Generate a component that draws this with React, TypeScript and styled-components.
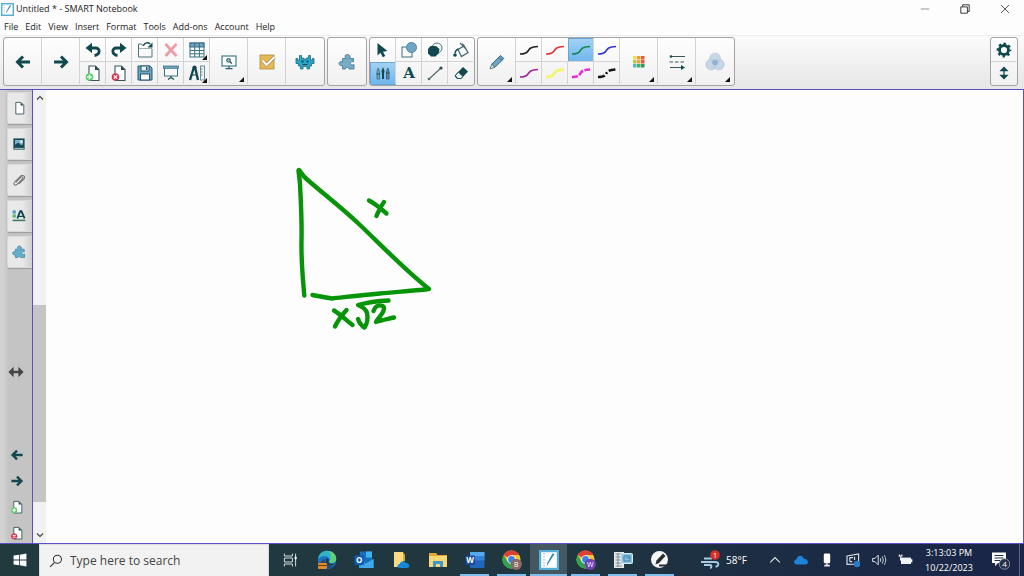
import React from "react";
import styled, { createGlobalStyle, css } from "styled-components";

const teal = "#12494f";
const sky = "#6fa5c4";
const edge = "#5b4fc4";

const Global = createGlobalStyle`
  *, *::before, *::after { box-sizing: border-box; }
  body { margin: 0; background: #fdfdfd; color: #222; font-family: "Open Sans", "Noto Sans", sans-serif; }
  button, input { font: inherit; color: inherit; }
  button { border: 0; padding: 0; margin: 0; background: none; }
  svg { display: block; flex: none; }
`;

const Page = styled.div`
  display: flex;
  flex-direction: column;
  min-height: 100vh;
`;

const TitleBar = styled.header`
  display: flex;
  align-items: center;
  height: 18px;
  padding-left: 1px;
  gap: 2px;
`;

const Title = styled.h1`
  flex: 1;
  margin: 0;
  font-size: 9px;
  line-height: 18px;
  font-weight: 400;
`;

const WindowButton = styled.button`
  display: grid;
  place-items: center;
  width: 38px;
  height: 18px;
`;

const MenuBar = styled.nav`
  display: flex;
  gap: 7px;
  height: 18px;
  padding: 0 4px;
  border-bottom: 1px solid #ededed;
`;

const MenuButton = styled.button`
  font-size: 9px;
  line-height: 16px;
`;

const ToolBar = styled.div`
  display: flex;
  gap: 2px;
  padding: 1px 6px 3px 3px;
  background: linear-gradient(#fbfbfb, #e6e6e7);
`;

const Group = styled.div<{ $end?: boolean }>`
  display: flex;
  height: 49px;
  border: 1px solid #a3a3a5;
  border-radius: 3px;
  overflow: hidden;
  background: linear-gradient(#fefefe, #f0f0f1);
  ${(p) => p.$end && css`margin-left: auto;`}
`;

const SmallGrid = styled.div<{ $columns: number }>`
  display: grid;
  grid-template-columns: repeat(${(p) => p.$columns}, 26px);
  grid-template-rows: 1fr 1fr;
`;

const Tool = styled.button<{ $big?: boolean; $on?: boolean; $menu?: boolean }>`
  position: relative;
  display: grid;
  place-items: center;
  width: ${(p) => (p.$big ? 38 : 26)}px;
  box-shadow: -1px -1px 0 #d3d3d5;
  ${(p) => p.$on && css`
    background: linear-gradient(#a4d2f5, #6db5ec);
    box-shadow: inset 0 0 0 1px #6aa5d3;
  `}
  ${(p) => p.$menu && css`
    &::after {
      content: "";
      position: absolute;
      right: ${p.$big ? 4 : 3}px;
      bottom: ${p.$big ? 3 : 2}px;
      border-style: solid;
      border-width: 0 0 5px 5px;
      border-color: transparent transparent #111 transparent;
    }
  `}
`;

const Work = styled.main`
  flex: 1;
  display: grid;
  grid-template-columns: 32px 14px 1fr;
  border-top: 1px solid ${edge};
  border-right: 1px solid ${edge};
  border-bottom: 1px solid ${edge};
`;

const Side = styled.aside`
  display: flex;
  flex-direction: column;
  padding: 2px 0 0 7px;
  background: linear-gradient(90deg, #d2d2d2 0 3px, #c4c4c4 9px);
`;

const Tabs = styled.div`
  display: flex;
  flex-direction: column;
  gap: 4px;
`;

const Tab = styled.button`
  display: grid;
  place-items: center;
  height: 32px;
  padding-right: 2px;
  border: 1px solid #d9d9d9;
  border-right: 0;
  border-radius: 2px 0 0 2px;
  box-shadow: 0 1px 1px #9c9c9c;
  background: linear-gradient(90deg, #e9e9e9 0 60%, #cfcfcf);
`;

const Resize = styled.button`
  flex: 1;
  display: grid;
  place-items: center;
  padding: 30px 8px 0 0;
`;

const PageButtons = styled.div`
  display: flex;
  flex-direction: column;
  gap: 6px;
`;

const PageButton = styled.button`
  display: grid;
  place-items: center;
  height: 20px;
  padding-right: 6px;
`;

const Scroll = styled.div`
  display: grid;
  grid-template-rows: 16px 200fr 198fr 25fr 16px;
  border-left: 1px solid ${edge};
  background: #f1f1f1;
`;

const ScrollButton = styled.button<{ $row: number }>`
  grid-row: ${(p) => p.$row};
  display: grid;
  place-items: center;
`;

const Thumb = styled.div`
  grid-row: 3;
  background: #c5c5c5;
`;

const Canvas = styled.section`
  position: relative;
  background: #fdfdfd;
`;

const Ink = styled.svg`
  position: absolute;
  left: 244px;
  top: 70px;
  fill: none;
  stroke: #079409;
  stroke-width: 4.400;
  stroke-linecap: round;
  stroke-linejoin: round;
`;

const TaskBar = styled.footer`
  display: flex;
  height: 32px;
  color: #fff;
  background: linear-gradient(90deg, #203a3e, #203640 55%, #1b2a45 82%, #1a2548);
`;

const Start = styled.button`
  display: grid;
  place-items: center;
  width: 39px;
`;

const Search = styled.label`
  display: flex;
  align-items: center;
  gap: 7px;
  width: 230px;
  padding-left: 9px;
  color: #333;
  background: #f2f2f2;
  border: 1px solid #dcdcdc;
  border-bottom: 0;
`;

const SearchInput = styled.input`
  min-width: 0;
  flex: 1;
  border: 0;
  padding: 0;
  outline: 0;
  background: none;
  font-size: 12px;
  &::placeholder { color: #444; opacity: 1; }
`;

const Apps = styled.div`
  display: flex;
  padding-left: 2px;
`;

const AppButton = styled.button<{ $open?: boolean; $active?: boolean }>`
  display: grid;
  place-items: center;
  width: 37px;
  background: ${(p) => (p.$active ? "#435860" : "none")};
  ${(p) => p.$open && css`
    background-image: linear-gradient(#7fbfee, #7fbfee);
    background-repeat: no-repeat;
    background-position: center bottom;
    background-size: ${p.$active ? "37px" : "29px"} 2px;
  `}
`;

const Tray = styled.div`
  display: flex;
  margin-left: auto;
`;

const Weather = styled.button`
  display: flex;
  align-items: center;
  gap: 6px;
  font-size: 10px;
  margin-right: 15px;
`;

const TrayButton = styled.button<{ $wide?: boolean }>`
  display: grid;
  place-items: center;
  width: ${(p) => (p.$wide ? 39 : 26)}px;
`;

const Clock = styled.button`
  width: 62px;
  font-size: 9px;
  line-height: 15px;
  text-align: center;
`;

const Desktop = styled.button`
  width: 5px;
  border-left: 1px solid #59637d;
`;

type SvgProps = { size?: number; children: React.ReactNode };
const Icon = ({ size = 20, children }: SvgProps) => (
  <svg width={size} height={size} viewBox="0 0 20 20" fill="none" aria-hidden="true">
    {children}
  </svg>
);

const ArrowLeft = ({ size = 20 }: { size?: number }) => (
  <Icon size={size}>
    <path d="M17 10H5M10 4.500L4.500 10L10 15.500" stroke={teal} strokeWidth="3" />
  </Icon>
);
const ArrowRight = ({ size = 20 }: { size?: number }) => (
  <Icon size={size}>
    <path d="M3 10H15M10 4.500L15.500 10L10 15.500" stroke={teal} strokeWidth="3" />
  </Icon>
);
const Undo = () => (
  <Icon>
    <path d="M7 8H12.500C17.500 8 17.500 14.500 11.500 15.500" stroke={teal} strokeWidth="2.800" />
    <path d="M9 2.800L2.500 8L9 13Z" fill={teal} />
  </Icon>
);
const Redo = () => (
  <Icon>
    <path d="M13 8H7.500C2.500 8 2.500 14.500 8.500 15.500" stroke={teal} strokeWidth="2.800" />
    <path d="M11 2.800L17.500 8L11 13Z" fill={teal} />
  </Icon>
);
const OpenFile = () => (
  <Icon>
    <path d="M9 5.500H7.500L6.500 4H3.500V17H17V9" stroke="#4d7278" />
    <path d="M4 8.500H17" stroke="#9db2b5" />
    <path d="M8.500 5.500C9.500 2.500 13 2 15 4" stroke={teal} strokeWidth="1.500" />
    <path d="M17.500 2.500V7.500H12.500Z" fill={teal} />
  </Icon>
);
const Delete = () => (
  <Icon><path d="M4.500 4L15.500 16M15.500 4L4.500 16" stroke="#ee9ca3" strokeWidth="2.800" /></Icon>
);
const TableIcon = () => (
  <Icon>
    <rect x="3" y="3" width="14" height="14" fill="#f8fbfc" stroke="#3d6f83" />
    <rect x="3" y="3" width="14" height="4" fill={sky} stroke="#3d6f83" />
    <path d="M3 10.500H17M3 13.800H17M7.700 3V17M12.400 3V17" stroke="#3d6f83" />
  </Icon>
);
const PageIcon = ({ badge, size = 20 }: { badge?: "add" | "remove"; size?: number }) => (
  <Icon size={size}>
    <path d="M6 3H12.500L16 6.500V17.500H6Z" fill="#fdfdfd" stroke="#38555b" strokeWidth="1.100" />
    <path d="M12 3V7H16Z" fill="#25484f" />
    {badge === "add" && (
      <>
        <circle cx="6.500" cy="14" r="3.800" fill="#55cc66" />
        <path d="M6.500 11.500V16.500M4 14H9" stroke="#e9ffe9" strokeWidth="1.500" />
      </>
    )}
    {badge === "remove" && (
      <>
        <circle cx="6.500" cy="14" r="3.800" fill="#d83350" />
        <path d="M4.800 12.300L8.200 15.700M8.200 12.300L4.800 15.700" stroke="#ffe3e8" strokeWidth="1.300" />
      </>
    )}
  </Icon>
);
const Save = () => (
  <Icon>
    <path d="M3 3H15L17 5V17H3Z" fill={sky} stroke="#24586c" />
    <rect x="6" y="3" width="8" height="5" fill="#e9f1f4" stroke="#24586c" />
    <rect x="5.500" y="11" width="9" height="6" fill="#fafafa" stroke="#24586c" />
    <rect x="11" y="4" width="1.500" height="3" fill="#24586c" />
  </Icon>
);
const Screen = () => (
  <Icon>
    <rect x="3.500" y="4" width="13" height="9" fill="#fafafa" stroke="#3d6f83" />
    <rect x="2.500" y="3" width="15" height="2.300" fill={sky} stroke="#3d6f83" strokeWidth=".8" />
    <path d="M10 13V15M7 16.500L10 14.500L13 16.500" stroke={teal} strokeWidth="1.200" />
  </Icon>
);
const Measure = () => (
  <Icon>
    <path d="M7 4L3 17M8 4L11 17" stroke={teal} strokeWidth="2.400" />
    <path d="M4.500 12H10" stroke={teal} strokeWidth="1.200" />
    <circle cx="7.500" cy="4.500" r="2" fill={teal} />
    <rect x="13.500" y="3" width="4" height="14" fill="#eef4f5" stroke="#6b8c94" />
    <path d="M13.500 6H15.500M13.500 9H15.500M13.500 12H15.500" stroke="#6b8c94" />
  </Icon>
);
const Monitor = () => (
  <Icon>
    <rect x="3" y="4" width="14" height="10" fill="#fcfcfc" stroke="#3f7d8b" strokeWidth="1.200" />
    <path d="M10 14V16.500M6.500 16.700H13.500" stroke="#2b626c" strokeWidth="1.300" />
    <circle cx="9.500" cy="8.300" r="1.800" fill="#9bc2d0" stroke={teal} />
    <path d="M11 9.700L12.800 11.500" stroke={teal} strokeWidth="1.300" />
  </Icon>
);
const Check = () => (
  <Icon>
    <rect x="3" y="3" width="14" height="14" fill="#e6b955" stroke="#a98a45" strokeWidth=".8" />
    <path d="M5.500 8.500L9.500 13L17.500 5" stroke="#94794a" strokeWidth="3.200" />
    <path d="M5.500 8.500L9.500 13L17.500 5" stroke="#fffaf0" strokeWidth="2.200" />
  </Icon>
);
const Monster = () => (
  <Icon>
    <path d="M4.500 3.500H6.500V6H8.500V7H11.500V6H13.500V3.500H15.500V8H17.500V6.500H19V11.500H16.500V14H14.500V17H12V14.500H8V17H5.500V14H3.500V11.500H1V6.500H2.500V8H4.500Z" fill="#2aa6c8" stroke="#176980" strokeWidth=".8" />
    <rect x="6.500" y="8.500" width="2" height="2" fill="#0f4250" /><rect x="11.500" y="8.500" width="2" height="2" fill="#0f4250" />
    <path d="M7.500 12.500H12.500" stroke="#0f4250" />
  </Icon>
);
const Puzzle = ({ size = 20, fill = "#78abc4" }: { size?: number; fill?: string }) => (
  <Icon size={size}>
    <path d="M5.500 6.500H9C7 4 8.500 2.500 10.500 2.500S14 4.500 12.500 6.500H16.500V10C14.500 9 13.500 10 13.500 11.300S15 13.500 17 12.500V17H12C12 15 8.500 15 8.500 17H5.500V13.500C3.500 14 2 13 2 11.500S3.500 9 5.500 10Z" fill={fill} stroke="#4b7f96" strokeWidth=".9" />
  </Icon>
);
const Cursor = () => (
  <Icon><path d="M4.500 3V15.500L7.500 12.800L9.800 17.300L12.300 16L10 11.700L14.500 11Z" fill={teal} /></Icon>
);
const Shapes = () => (
  <Icon>
    <rect x="3" y="7" width="10" height="10" fill="#fafafa" stroke="#3d6f83" />
    <circle cx="12.500" cy="7.500" r="5" fill={sky} stroke="#5086a2" />
  </Icon>
);
const Polygon = () => (
  <Icon>
    <circle cx="12" cy="8" r="5" fill="#f7f9f9" stroke="#4f7378" />
    <path d="M5.500 6H11L14.500 9L13.500 13.500L10.500 16.500H6L3 13.500V9Z" fill={teal} />
  </Icon>
);
const Fill = () => (
  <Icon>
    <path d="M7 9.500L13 6L17 12.500L10.500 16.500Z" fill="#f7fafa" stroke="#456a70" strokeWidth="1.300" />
    <path d="M9 3L15 9M11.500 3.500L13 6" stroke="#456a70" strokeWidth="1.100" />
    <path d="M7.500 9C5 9.500 4.500 11 4 13" stroke={teal} strokeWidth="1.400" />
    <circle cx="4" cy="15" r="1.800" fill={teal} />
  </Icon>
);
const Pens = () => (
  <Icon>
    <path d="M4 16V8.500L5.200 5L6.500 8.500V16Z" fill="#7ba9bf" stroke="#35677f" strokeWidth=".8" />
    <path d="M9 16V11L8.500 8L10 4L11.500 8L11 11V16Z" fill={teal} />
    <path d="M13.500 16V8.500L14.800 5L16 8.500V16Z" fill="#5591ab" stroke="#24556d" strokeWidth=".8" />
    <path d="M3.500 11H7M13 10H16.500" stroke="#1c4b59" />
  </Icon>
);
const Line = () => (
  <Icon>
    <path d="M4 16L16 5" stroke="#56696c" strokeWidth="1.200" />
    <circle cx="4" cy="16" r="1.300" fill="#56696c" /><circle cx="16" cy="5" r="1.600" fill="#35494c" />
  </Icon>
);
const Eraser = () => (
  <Icon>
    <path d="M12 4L17 8.500L10 16H6L3.500 12.800Z" fill={teal} />
    <path d="M7.200 9L12 13.500L9.800 15.500H6.500L4.500 12.500Z" fill="#edf4f5" stroke={teal} strokeWidth=".9" />
  </Icon>
);
const LetterTool = styled.span`
  font-family: "DejaVu Serif", "Liberation Serif", serif;
  font-size: 15px;
  line-height: 20px;
  font-weight: 700;
  color: ${teal};
`;
const Pencil = () => (
  <Icon>
    <path d="M13.500 3.500L16.800 6.500L8 15.300L4.700 12.300Z" fill={sky} stroke="#36677d" />
    <path d="M4.700 12.300L8 15.300L3 17Z" fill="#d7e2e5" stroke="#456a70" strokeWidth=".8" />
    <path d="M12 5.500L15 8.500" stroke="#36677d" />
  </Icon>
);
const Stroke = ({ color, soft, dash }: { color: string; soft?: boolean; dash?: string }) => (
  <Icon>
    <path d="M1 14C5 14 7.500 13.500 9 11S11 7 19 6.500" stroke={color} strokeWidth={soft ? 3 : dash ? 2.600 : 1.700} opacity={soft ? 0.7 : 1} strokeDasharray={dash} />
  </Icon>
);
const Palette = () => (
  <Icon>
    {["#f1dc4c", "#ef9d37", "#e25b48", "#a9cc52", "#f0a14c", "#d9624b", "#58b6d0", "#4cac6b", "#3d9458"].map((c, i) => (
      <rect key={c} x={4 + (i % 3) * 4} y={4 + Math.floor(i / 3) * 4} width="3.500" height="3.500" fill={c} />
    ))}
  </Icon>
);
const Lines = () => (
  <Icon>
    <path d="M3 4.500H18M3 15.500H15" stroke="#3c5559" strokeWidth="1.200" />
    <path d="M2.500 10H18" stroke="#3c5559" strokeDasharray="3.500 2" />
    <circle cx="4" cy="4.500" r="1.300" fill={teal} /><path d="M14 13L18 15.500L14 18Z" fill={teal} />
  </Icon>
);
const Blend = () => (
  <Icon>
    <circle cx="10" cy="6.500" r="5.500" fill="#c9d8e8" stroke="#b9c8d9" strokeWidth=".6" />
    <circle cx="6.200" cy="12.500" r="5.500" fill="#bccde0" fillOpacity=".8" stroke="#b9c8d9" strokeWidth=".6" />
    <circle cx="13.800" cy="12.500" r="5.500" fill="#bccde0" fillOpacity=".8" stroke="#b9c8d9" strokeWidth=".6" />
    <circle cx="10" cy="10.500" r="2.800" fill="#8fb1d6" />
  </Icon>
);
const Gear = () => (
  <Icon>
    <circle cx="10" cy="10" r="4.500" stroke={teal} strokeWidth="2.800" />
    <circle cx="10" cy="10" r="6.100" stroke={teal} strokeWidth="2.600" strokeDasharray="2.300 2.490" strokeDashoffset="1.150" />
  </Icon>
);
const UpDown = () => (
  <Icon><path d="M10 5V15M7 7.500L10 4.500L13 7.500ZM7 12.500L10 15.500L13 12.500Z" fill={teal} stroke={teal} strokeWidth="1.300" /></Icon>
);
const Gallery = () => (
  <Icon size={16}>
    <rect x="3" y="3" width="14" height="14" fill="#174a55" />
    <path d="M5 11L9 8L13 11.500L15 10V5H5Z" fill="#7fb6cc" /><circle cx="13" cy="7" r="1.500" fill="#fff" />
    <path d="M4 15.500H16" stroke="#d7e6ea" />
  </Icon>
);
const Clip = () => (
  <Icon size={16}>
    <path d="M6 13L12.500 6.500C14 5 16 7 14.500 8.500L7.500 15.500C5 18 2 15 4.500 12.500L12 5C14.500 2.500 19 6 16 9L10 15" stroke="#707274" strokeWidth="1.300" />
  </Icon>
);
const Properties = () => (
  <Icon size={16}>
    <rect x="2" y="3" width="4" height="4" fill="#4f9bc8" /><rect x="2" y="8" width="4" height="4" fill="#55b869" />
    <path d="M8 13L11.500 4H13L17 13" stroke={teal} strokeWidth="2.400" /><path d="M9 10.500H15" stroke={teal} strokeWidth="1.500" />
    <path d="M2 15.500H18" stroke="#447b63" strokeWidth="2" />
  </Icon>
);
const Caret = ({ down, color = "#444" }: { down?: boolean; color?: string }) => (
  <Icon size={12}><path d={down ? "M5 7.500L10 12.500L15 7.500" : "M5 12.500L10 7.500L15 12.500"} stroke={color} strokeWidth="2" /></Icon>
);
const Logo = ({ size }: { size: number }) => (
  <Icon size={size}>
    <rect x="1" y="1" width="18" height="18" fill="#fff" stroke="#55add9" strokeWidth="2.400" />
    <path d="M5 3V17" stroke="#9ccbe3" strokeWidth="1.500" strokeDasharray="1.500 1.500" />
    <path d="M15.500 4L9 14L7.800 16.200L8 13.500L13.500 3.500Z" fill="#2e84b4" />
  </Icon>
);

const TaskView = () => (
  <Icon size={16}>
    <path d="M3 2V5H13V2M3 18V15H13V18M3 7.500H13V12.500H3ZM17 2V18" stroke="#dbe2e3" strokeWidth="1.200" />
    <rect x="15.800" y="6" width="2.500" height="3" fill="#fff" />
  </Icon>
);
const Edge = () => (
  <Icon>
    <circle cx="10" cy="10" r="9.200" fill="#1b76c8" />
    <path d="M1 9C2 3 6 .8 10 .8C16 .8 19.500 5 19.200 9.500C19 13 14 14 12 12C14 9 11 6 8 6C4 6 2 7.500 1 9Z" fill="#2fb4c8" />
    <path d="M12 1C16.500 2 19.500 5 19.200 9.500C19 13 14 14 12 12C15 9 14 5 12 1Z" fill="#62cf78" />
    <path d="M8 9C6.500 13 10 17 16 16C13 19.500 8 20 5 17S4 9 8 9Z" fill="#144f93" />
    <path d="M9 8.500C11 7.500 12.500 9.500 11.500 12C12 14 15 14.500 17.500 13.500C15 17 9.500 16 8.500 12.500Z" fill="#203a42" />
    <rect x="1" y="13" width="9" height="6" rx="1" fill="#df8b2a" /><path d="M1 15.500H10M4 13V11.500H7V13" stroke="#6b3d16" />
  </Icon>
);
const officeIcon = (kind: "O" | "W") => (
  <Icon>
    {kind === "O" ? (
      <>
        <rect x="6" y="1.500" width="12" height="12" fill="#1570c4" /><rect x="12" y="1.500" width="6" height="6" fill="#43b3ec" />
        <path d="M5 9L12 13.500L19.500 9V18H5Z" fill="#2e9be3" /><path d="M5 18L19.500 9V18Z" fill="#3fa9ea" />
      </>
    ) : (
      <>
        <rect x="5" y="2" width="14.500" height="16" rx="1" fill="#2364bd" /><rect x="5" y="2" width="14.500" height="4.500" fill="#56a9ed" />
        <rect x="5" y="6.500" width="14.500" height="4" fill="#3480d8" />
      </>
    )}
    <rect x=".5" y="5.500" width="9.500" height="9.500" rx="1" fill={kind === "O" ? "#0d5cad" : "#194b9d"} />
    <text x="5.200" y="13" textAnchor="middle" fontFamily="Open Sans, sans-serif" fontSize="8" fontWeight="700" fill="#fff">{kind}</text>
  </Icon>
);
const Notes = () => (
  <Icon>
    <path d="M3 2H12V17H3Z" fill="#f7dc83" /><path d="M12 2L14 5V11H12Z" fill="#dba83f" />
    <path d="M8.500 18C5.500 18 6 14 8.700 14C9.500 10.500 14 10.500 14.800 13C19 12.500 19.500 18 16 18Z" fill="#1687d9" />
  </Icon>
);
const Folder = () => (
  <Icon>
    <path d="M1 3H8L9.500 5H19V17H1Z" fill="#e7a833" /><rect x="1" y="6" width="18" height="11" fill="#f8d775" />
    <path d="M5 17V11H15V17H12V14H8V17Z" fill="#4296cf" />
  </Icon>
);
const Chrome = ({ letter, color }: { letter: string; color: string }) => (
  <Icon>
    <circle cx="9.500" cy="9.500" r="9" fill="#f6c933" />
    <path d="M9.500 9.500L1.700 5A9 9 0 0 1 17.300 5H9.500Z" fill="#dd4035" />
    <path d="M1.700 5A9 9 0 0 0 9.500 18.500L13.500 11.500L5.600 11.500Z" fill="#31a350" />
    <circle cx="9.500" cy="9.500" r="4.300" fill="#fff" /><circle cx="9.500" cy="9.500" r="3.400" fill="#3f7fe6" />
    <circle cx="14.300" cy="14.300" r="5.600" fill={color} />
    <text x="14.300" y="17" textAnchor="middle" fontFamily="Open Sans, sans-serif" fontSize="7" fill="#fff">{letter}</text>
  </Icon>
);
const SmartTools = () => (
  <Icon>
    <path d="M1 2H11V18H1Z" fill="#e5e8e9" /><path d="M2.500 4H9M2.500 7H8M2.500 10H8M2.500 13H9M2.500 16H9M5 3V17" stroke="#7f8e93" />
    <rect x="8" y="3.500" width="11.500" height="10" rx="1" fill="#8cc2e2" stroke="#d8edf8" /><path d="M11 6H17V11H11ZM13 8H17" stroke="#3a7fad" />
  </Icon>
);
const InkApp = () => (
  <Icon>
    <circle cx="9.500" cy="9.500" r="8.500" fill="#f7f7f7" />
    <path d="M13 3.500L15.500 6L9 13L5.500 14.500L6.500 10.500Z" fill="#2b2e30" /><path d="M9 15.500H18" stroke="#2b2e30" strokeWidth="2" />
  </Icon>
);
const Wind = () => (
  <Icon>
    <path d="M4 8.500H12M1 12H15.500C19.500 12 19 17 15.500 16.500M4 15H10C12 15 12 18 10 18" stroke="#a9cbe0" strokeWidth="1.900" />
    <circle cx="15" cy="5" r="4.800" fill="#d62f26" />
    <text x="15" y="7.600" textAnchor="middle" fontFamily="Open Sans, sans-serif" fontSize="7" fill="#fff">1</text>
  </Icon>
);
const Cloud = () => (
  <Icon size={16}><path d="M4.500 15.500C.5 15.500 0 10.500 4 9.500C5 4 12 3 13.500 8.500C19 8 20.500 15.500 16 15.500Z" fill="#1d83d8" /></Icon>
);
const Mic = () => (
  <Icon size={16}><rect x="6" y="2" width="8" height="12" rx="1.500" fill="#fff" /><path d="M10 14V18M6.500 17H13.500" stroke="#e6e9ee" strokeWidth="2" /></Icon>
);
const Display = () => (
  <Icon size={16}>
    <path d="M2.500 5L17 2.500V15L2.500 15.500Z" stroke="#dfe3ea" strokeWidth="1.400" /><path d="M6 7H10M6 7V12M6 12H9M12 6V10" stroke="#dfe3ea" strokeWidth="1.400" />
    <circle cx="15" cy="15" r="4" fill="#277bc9" />
  </Icon>
);
const Speaker = () => (
  <Icon size={16}>
    <path d="M2 8H5L9 4V16L5 12H2Z" stroke="#dfe3ea" strokeWidth="1.200" />
    <path d="M11.500 7.500Q13 10 11.500 12.500M14 5.500Q17 10 14 14.500M16.500 4Q20.500 10 16.500 16" stroke="#c7ccd6" strokeWidth="1.200" />
  </Icon>
);
const Battery = () => (
  <Icon size={16}>
    <rect x="5" y="7" width="12.500" height="8" fill="#f1f2f5" /><rect x="17.500" y="9" width="1.700" height="4" fill="#f1f2f5" />
    <path d="M2 5H7M3 3V5M6 3V5M4.500 6V10H7" stroke="#fff" strokeWidth="1.300" />
  </Icon>
);
const Notice = () => (
  <Icon>
    <path d="M2 2.500H16V13H8L5 16V13H2Z" fill="#fff" /><path d="M4.500 5.500H13.500M4.500 8H13.500M4.500 10.500H10" stroke="#25304d" />
    <circle cx="14.500" cy="14" r="5.300" fill="#26304a" stroke="#99a1b0" strokeWidth=".8" />
    <text x="14.500" y="17" textAnchor="middle" fontFamily="Open Sans, sans-serif" fontSize="8" fill="#fff">4</text>
  </Icon>
);

type Item = { name: string; icon: React.ReactNode; on?: boolean; menu?: boolean };

const fileTools: Item[] = [
  { name: "Undo", icon: <Undo /> },
  { name: "Redo", icon: <Redo /> },
  { name: "Open", icon: <OpenFile /> },
  { name: "Delete", icon: <Delete /> },
  { name: "Table", icon: <TableIcon />, menu: true },
  { name: "Add page", icon: <PageIcon badge="add" /> },
  { name: "Delete page", icon: <PageIcon badge="remove" /> },
  { name: "Save", icon: <Save /> },
  { name: "Screen shade", icon: <Screen /> },
  { name: "Measurement tools", icon: <Measure />, menu: true },
];
const drawTools: Item[] = [
  { name: "Select", icon: <Cursor /> },
  { name: "Shapes", icon: <Shapes /> },
  { name: "Regular polygons", icon: <Polygon /> },
  { name: "Fill", icon: <Fill /> },
  { name: "Pens", icon: <Pens />, on: true },
  { name: "Text", icon: <LetterTool>A</LetterTool> },
  { name: "Lines", icon: <Line /> },
  { name: "Eraser", icon: <Eraser /> },
];
const penStyles: Item[] = [
  { name: "Black pen", icon: <Stroke color="#222" /> },
  { name: "Red pen", icon: <Stroke color="#e2333b" /> },
  { name: "Green pen", icon: <Stroke color="#128a55" />, on: true },
  { name: "Blue pen", icon: <Stroke color="#3434d8" /> },
  { name: "Purple pen", icon: <Stroke color="#9c2a9c" /> },
  { name: "Yellow highlighter", icon: <Stroke color="#f1f53c" soft /> },
  { name: "Magenta dashes", icon: <Stroke color="#e62ad8" dash="6 1.500" /> },
  { name: "Black dashes", icon: <Stroke color="#161616" dash="7 2 2 2" /> },
];
const sideTabs: Item[] = [
  { name: "Page sorter", icon: <PageIcon size={16} /> },
  { name: "Gallery", icon: <Gallery /> },
  { name: "Attachments", icon: <Clip /> },
  { name: "Properties", icon: <Properties /> },
  { name: "Add-ons", icon: <Puzzle size={16} fill="#5fb0cf" /> },
];
const apps: (Item & { open?: boolean })[] = [
  { name: "Task View", icon: <TaskView /> },
  { name: "Edge", icon: <Edge /> },
  { name: "Outlook", icon: officeIcon("O") },
  { name: "Notes", icon: <Notes /> },
  { name: "File Explorer", icon: <Folder /> },
  { name: "Word", icon: officeIcon("W"), open: true },
  { name: "Chrome, profile B", icon: <Chrome letter="B" color="#8a6a62" />, open: true },
  { name: "SMART Notebook", icon: <Logo size={20} />, open: true, on: true },
  { name: "Chrome, profile W", icon: <Chrome letter="W" color="#7141b5" />, open: true },
  { name: "SMART Tools", icon: <SmartTools />, open: true },
  { name: "SMART Ink", icon: <InkApp />, open: true },
];
const tray: Item[] = [
  { name: "Show hidden icons", icon: <Icon size={16}><path d="M4 13L10 7L16 13" stroke="#e1e5ea" strokeWidth="1.400" /></Icon> },
  { name: "OneDrive", icon: <Cloud /> },
  { name: "Microphone", icon: <Mic /> },
  { name: "Display", icon: <Display /> },
  { name: "Volume", icon: <Speaker /> },
  { name: "Battery", icon: <Battery /> },
];
const menus = ["File", "Edit", "View", "Insert", "Format", "Tools", "Add-ons", "Account", "Help"];

const Tools = ({ items, big }: { items: Item[]; big?: boolean }) => (
  <>
    {items.map((t) => (
      <Tool key={t.name} aria-label={t.name} $big={big} $on={t.on} $menu={t.menu}>{t.icon}</Tool>
    ))}
  </>
);

export default function App() {
  return (
    <Page>
      <Global />
      <TitleBar>
        <Logo size={13} />
        <Title>Untitled * - SMART Notebook</Title>
        <WindowButton aria-label="Minimize"><Icon size={12}><path d="M3 10H17" stroke="#888" strokeWidth="1.500" /></Icon></WindowButton>
        <WindowButton aria-label="Restore"><Icon size={12}><path d="M3 6.500H14V17H3ZM6 6V3H17V14H14" stroke="#333" strokeWidth="1.600" /></Icon></WindowButton>
        <WindowButton aria-label="Close"><Icon size={12}><path d="M3.500 3.500L16.500 16.500M16.500 3.500L3.500 16.500" stroke="#444" strokeWidth="1.500" /></Icon></WindowButton>
      </TitleBar>
      <MenuBar>
        {menus.map((m) => <MenuButton key={m}>{m}</MenuButton>)}
      </MenuBar>
      <ToolBar>
        <Group>
          <Tools big items={[{ name: "Previous page", icon: <ArrowLeft /> }, { name: "Next page", icon: <ArrowRight /> }]} />
          <SmallGrid $columns={5}><Tools items={fileTools} /></SmallGrid>
          <Tools big items={[
            { name: "View screens", icon: <Monitor />, menu: true },
            { name: "Response", icon: <Check /> },
            { name: "Lab activities", icon: <Monster /> },
          ]} />
        </Group>
        <Group><Tools big items={[{ name: "Add-ons", icon: <Puzzle /> }]} /></Group>
        <Group><SmallGrid $columns={4}><Tools items={drawTools} /></SmallGrid></Group>
        <Group>
          <Tools big items={[{ name: "Pen type", icon: <Pencil />, menu: true }]} />
          <SmallGrid $columns={4}><Tools items={penStyles} /></SmallGrid>
          <Tools big items={[
            { name: "Color", icon: <Palette />, menu: true },
            { name: "Line style", icon: <Lines />, menu: true },
            { name: "Transparency", icon: <Blend />, menu: true },
          ]} />
        </Group>
        <Group $end>
          <SmallGrid $columns={1}>
            <Tools items={[{ name: "Settings", icon: <Gear /> }, { name: "Move toolbar", icon: <UpDown /> }]} />
          </SmallGrid>
        </Group>
      </ToolBar>
      <Work>
        <Side>
          <Tabs>{sideTabs.map((t) => <Tab key={t.name} aria-label={t.name}>{t.icon}</Tab>)}</Tabs>
          <Resize aria-label="Resize side bar">
            <Icon size={16}>
              <path d="M3 10H17" stroke="#444" strokeWidth="3" />
              <path d="M7 3.500L.500 10L7 16.500ZM13 3.500L19.500 10L13 16.500Z" fill="#444" />
            </Icon>
          </Resize>
          <PageButtons>
            <PageButton aria-label="Previous page"><ArrowLeft size={16} /></PageButton>
            <PageButton aria-label="Next page"><ArrowRight size={16} /></PageButton>
            <PageButton aria-label="Add page"><PageIcon badge="add" size={16} /></PageButton>
            <PageButton aria-label="Delete page"><PageIcon badge="remove" size={16} /></PageButton>
          </PageButtons>
        </Side>
        <Scroll>
          <ScrollButton $row={1} aria-label="Scroll up"><Caret /></ScrollButton>
          <Thumb />
          <ScrollButton $row={5} aria-label="Scroll down"><Caret down /></ScrollButton>
        </Scroll>
        <Canvas aria-label="Page">
          <Ink width="150" height="175" viewBox="290 160 150 175" role="img" aria-label="Right triangle, hypotenuse x, base x root 2">
            <path d="M298.500 171C299 175 299.500 178 300 184C301 205 302 220 301.500 240C301 262 303 280 304.300 295.500" />
            <path d="M299 170C302 175 305 178 310 182C325 195 342 208 360 225C382 246 405 270 429 289C412 291 395 292 380 293.500C362 295 346 297 332 298.500C325 297.500 318 296 312.500 295" />
            <path d="M369 200.500C375 203.500 380 208 386.500 213.500M384 202C380 207 379 210 376.500 216" />
            <path d="M334 310.500C340 314 346 320 352.500 325M346.500 310C342 315 338 320 335 326.500" />
            <path d="M388.500 300.500C378 301 367 302.500 358 305C363 307 366 309 367 313C368 318 367 324 364.500 327.500C362 326 359 322 358 319" />
            <path d="M373.500 311C375 307 378 305 381 305.500C386 306 384 311 381 315C379 318 377 320 376 322C382 320 388 319 394 317.500" />
          </Ink>
        </Canvas>
      </Work>
      <TaskBar>
        <Start aria-label="Start">
          <Icon size={16}><path d="M2 4.500L9 3.500V9.500H2ZM10 3.300L18 2V9.500H10ZM2 10.500H9V16.500L2 15.500ZM10 10.500H18V18L10 16.700Z" fill="#fff" /></Icon>
        </Start>
        <Search>
          <Icon size={14}><circle cx="12" cy="7.500" r="5.800" stroke="#333" strokeWidth="1.500" /><path d="M8 12L1.500 18.500" stroke="#333" strokeWidth="1.600" /></Icon>
          <SearchInput aria-label="Search" placeholder="Type here to search" />
        </Search>
        <Apps>
          {apps.map((a) => <AppButton key={a.name} aria-label={a.name} $open={a.open} $active={a.on}>{a.icon}</AppButton>)}
        </Apps>
        <Tray>
          <Weather><Wind />58°F</Weather>
          {tray.map((t) => <TrayButton key={t.name} aria-label={t.name}>{t.icon}</TrayButton>)}
          <Clock>3:13:03 PM<br />10/22/2023</Clock>
          <TrayButton aria-label="Notifications" $wide><Notice /></TrayButton>
          <Desktop aria-label="Show desktop" />
        </Tray>
      </TaskBar>
    </Page>
  );
}
